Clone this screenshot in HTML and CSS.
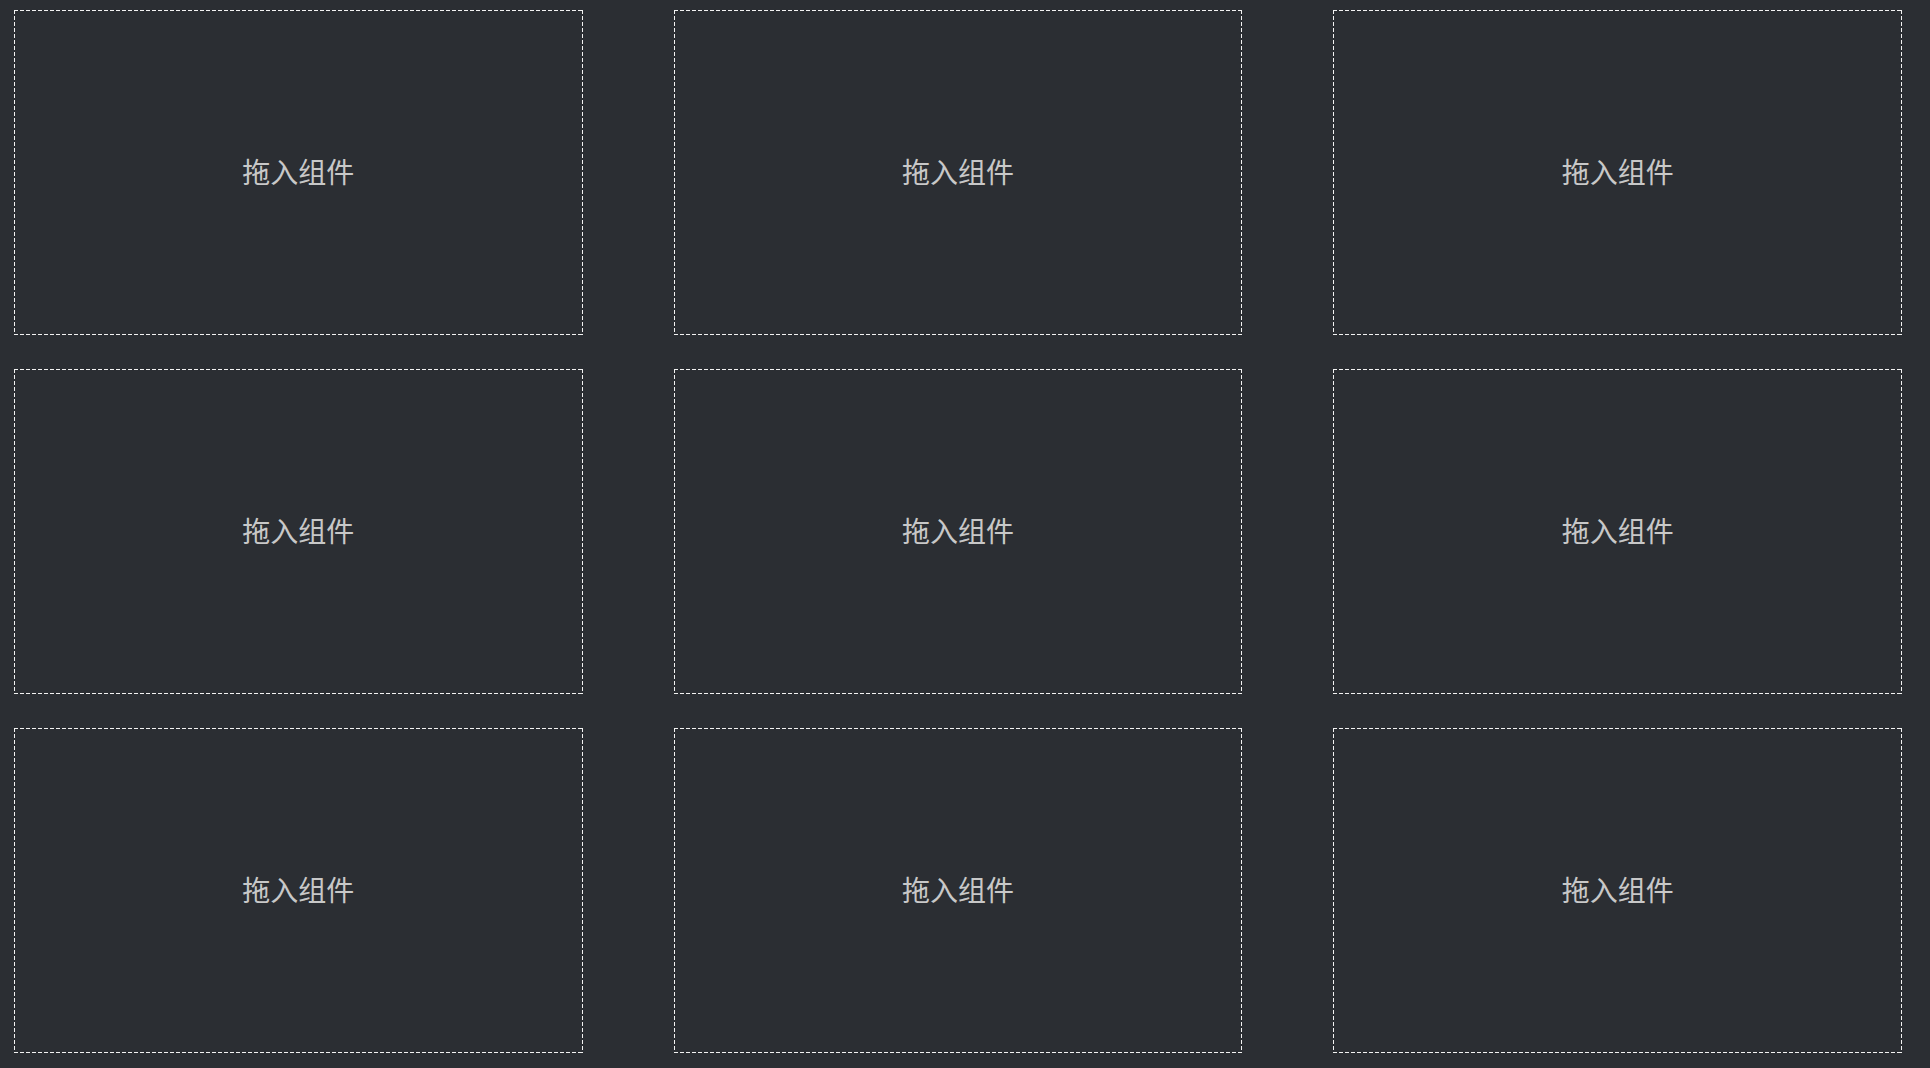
FILE: index.html
```html
<!DOCTYPE html>
<html lang="zh">
<head>
<meta charset="utf-8">
<link rel="stylesheet" href="styles.css">
</head>
<body>
<div class="grid">
  <div class="slot">拖入组件</div>
  <div class="slot">拖入组件</div>
  <div class="slot">拖入组件</div>
  <div class="slot">拖入组件</div>
  <div class="slot">拖入组件</div>
  <div class="slot">拖入组件</div>
  <div class="slot">拖入组件</div>
  <div class="slot">拖入组件</div>
  <div class="slot">拖入组件</div>
</div>
</body>
</html>
```
FILE: styles.css
```css
html, body {
  margin: 0;
  padding: 0;
  background: #2b2e33;
  height: 100%;
}
body {
  padding: 10px 28px 15px 14px;
  box-sizing: border-box;
  font-family: "Noto Sans CJK SC", "Noto Sans", sans-serif;
}
.grid {
  display: grid;
  grid-template-columns: repeat(3, 1fr);
  grid-template-rows: repeat(3, 1fr);
  column-gap: 91px;
  row-gap: 34px;
  height: 100%;
}
.slot {
  display: flex;
  align-items: center;
  justify-content: center;
  color: #c8c8c8;
  font-size: 28px;
  line-height: 1;
  padding-bottom: 3px;
  box-sizing: border-box;
  background-image:
    repeating-linear-gradient(90deg, #f2f2f2 0 4px, transparent 4px 6px),
    repeating-linear-gradient(90deg, #f2f2f2 0 4px, transparent 4px 6px),
    repeating-linear-gradient(180deg, #f2f2f2 0 4px, transparent 4px 6px),
    repeating-linear-gradient(180deg, #f2f2f2 0 4px, transparent 4px 6px);
  background-size: 100% 1px, 100% 1px, 1px 100%, 1px 100%;
  background-position: 0 0, 0 100%, 0 0, 100% 0;
  background-repeat: no-repeat;
}
```
